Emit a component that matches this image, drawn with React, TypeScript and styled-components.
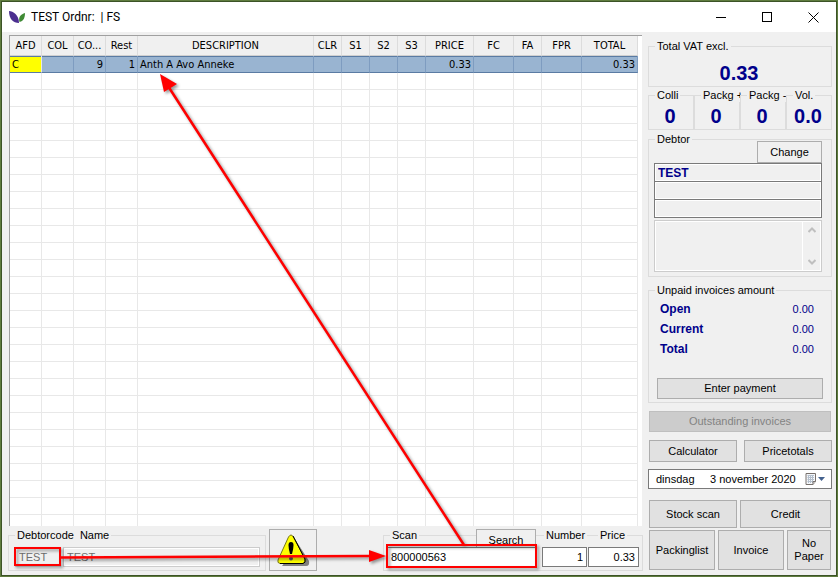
import React from "react";
import styled, { createGlobalStyle } from "styled-components";

const navy = "#00008b";

const GlobalStyle = createGlobalStyle`
  * { box-sizing: border-box; }
  html, body { margin: 0; }
  body, button, input, textarea { font: 11px/13px "Liberation Sans", Arial, sans-serif; color: #000; }
`;

const Window = styled.div`
  position: relative;
  display: flex;
  flex-direction: column;
  height: 100vh;
  min-height: 577px;
  min-width: 720px;
  background: #f0f0f0;
  border: 1px solid #5f7c3e;
  box-shadow: inset 0 0 0 1px #3c5326;
  overflow: hidden;
`;

const TitleBar = styled.header`
  display: flex;
  align-items: center;
  height: 30px;
  margin: 1px 1px 0;
  padding-left: 7px;
  background: #fff;
  flex: none;
`;

const Title = styled.h1`
  flex: 1;
  margin: 0 0 0 5px;
  font: 12px/16px Roboto, "Open Sans", sans-serif;
  white-space: pre;
`;

const CaptionButton = styled.button`
  display: grid;
  place-items: center;
  width: 46px;
  height: 29px;
  padding: 0;
  border: 0;
  background: transparent;
`;

const Body = styled.main`
  flex: 1;
  min-height: 0;
  display: grid;
  grid-template-columns: minmax(0, 1fr) 184px;
  column-gap: 5px;
  padding: 3px 5px 5px 7px;
`;

const Left = styled.div`
  display: flex;
  flex-direction: column;
  min-height: 0;
`;

const GridPanel = styled.div`
  flex: 1;
  min-height: 0;
  margin: 0 1px;
  padding-right: 4px;
  overflow: hidden;
  background: #fff;
  border-top: 1px solid #a0a0a0;
  border-left: 1px solid #a0a0a0;
`;

const OrderTable = styled.table`
  width: 100%;
  table-layout: fixed;
  border-collapse: separate;
  border-spacing: 0;
  font: 11px/14px "DejaVu Sans Condensed", "DejaVu Sans", sans-serif;
`;

const Head = styled.th`
  height: 20px;
  padding: 1px 0 0;
  font-weight: normal;
  background: #f0f0f0;
  border-right: 1px solid #dcdcdc;
  border-bottom: 1px solid #d0d0d0;
  white-space: nowrap;
`;

const Cell = styled.td<{ $right?: boolean; $tone?: "selected" | "marked" }>`
  height: 17px;
  padding: ${(p) => (p.$tone ? "1px 2px 0" : "0 2px")};
  text-align: ${(p) => (p.$right ? "right" : "left")};
  white-space: nowrap;
  background: ${(p) => (p.$tone === "selected" ? "#99b4d1" : p.$tone === "marked" ? "#ffff00" : "#fff")};
  border-right: 1px solid ${(p) => (p.$tone === "selected" ? "#7e9cc0" : "#e8e8e8")};
  border-bottom: 1px solid ${(p) => (p.$tone ? "#5a7ba3" : "#e8e8e8")};
  box-shadow: ${(p) => (p.$tone ? "inset 0 1px #5a7ba3" : "none")};
`;

const Group = styled.fieldset`
  min-width: 0;
  margin: 0;
  padding: 0;
  border: 1px solid #dcdcdc;
`;

const Legend = styled.legend`
  margin-left: 6px;
  padding: 0 2px;
  height: 13px;
  white-space: nowrap;
`;

const Button = styled.button`
  padding: 0;
  background: #e1e1e1;
  border: 1px solid #adadad;
  &:disabled { background: #cccccc; border-color: #bfbfbf; color: #838383; }
`;

const Field = styled.input<{ $right?: boolean }>`
  min-width: 0;
  width: 100%;
  height: 20px;
  padding: 0 3px;
  border: 1px solid #7a7a7a;
  border-radius: 0;
  background: #fff;
  text-align: ${(p) => (p.$right ? "right" : "left")};
  &:disabled { background: #f0f0f0; border-color: #cccccc; color: #6d6d6d; box-shadow: inset 0 0 0 1px #fff; }
`;

const EntryRow = styled.div`
  display: flex;
  flex: none;
  height: 45px;
  padding-top: 3px;
`;

const DebtorGroup = styled(Group)`
  flex: 1;
  height: 42px;
  margin-right: 3px;
`;

const LabelPair = styled(Legend)`
  display: flex;
  gap: 6px;
`;

const DebtorFields = styled.div`
  display: grid;
  grid-template-columns: 46px minmax(0, 1fr);
  gap: 2px;
  padding: 5px 5px 0 6px;
`;

const WarningButton = styled(Button)`
  display: grid;
  place-items: center;
  flex: none;
  width: 48px;
  height: 42px;
  background: #f0f0f0;
`;

const ScanFrame = styled.section`
  flex: none;
  width: 260px;
  height: 42px;
  margin-left: 66px;
  padding: 0 4px;
  background: linear-gradient(#dcdcdc, #dcdcdc) 0 6px / 100% 1px no-repeat,
    linear-gradient(#dcdcdc, #dcdcdc) 0 100% / 100% 1px no-repeat,
    linear-gradient(#dcdcdc, #dcdcdc) 0 100% / 1px 35px no-repeat,
    linear-gradient(#dcdcdc, #dcdcdc) 100% 100% / 1px 35px no-repeat;
`;

const ScanColumns = styled.div`
  display: grid;
  grid-template-columns: 154px 45px 51px;
  column-gap: 1px;
`;

const ScanCell = styled.div`
  display: flex;
  flex-direction: column;
  justify-content: space-between;
  height: 38px;
`;

const ScanCodeCell = styled(ScanCell)`
  margin-right: 4px;
`;

const Caption = styled.label<{ $indent: number }>`
  align-self: flex-start;
  margin-left: ${(p) => p.$indent}px;
  padding: 0 2px;
  background: #f0f0f0;
`;

const ScanCaption = styled.div`
  display: flex;
  align-items: flex-start;
  justify-content: space-between;
`;

const SearchButton = styled(Button)`
  width: 60px;
  height: 18px;
  padding-top: 4px;
  margin-right: 1px;
  border-bottom: 0;
  background: #f0f0f0;
`;

const Side = styled.aside`
  display: flex;
  flex-direction: column;
  padding-top: 5px;
`;

const TotalGroup = styled(Group)`
  height: 47px;
`;

const BigValue = styled.output<{ $drop?: boolean }>`
  display: block;
  padding-top: ${(p) => (p.$drop ? "9px" : "3px")};
  padding-right: 2px;
  font-size: 20px;
  line-height: 22px;
  font-weight: bold;
  text-align: center;
  color: ${navy};
`;

const Counters = styled.div`
  display: grid;
  grid-template-columns: repeat(4, minmax(0, 1fr));
  margin-top: 2px;
`;

const Counter = styled(Group)`
  height: 41px;
`;

const DebtorPanel = styled(Group)`
  height: 144px;
  margin-top: 3px;
`;

const DebtorStack = styled.div`
  display: flex;
  flex-direction: column;
  margin: -5px 9px 0 5px;
`;

const ChangeButton = styled(Button)`
  align-self: flex-end;
  width: 65px;
  height: 22px;
  background: #f0f0f0;
`;

const DebtorLine = styled.input`
  width: 100%;
  height: 19px;
  margin-bottom: -1px;
  padding: 0 3px;
  border: 1px solid #7a7a7a;
  background: #f0f0f0;
  box-shadow: inset 0 0 0 1px #fff;
  font-size: 12px;
  font-weight: bold;
  color: ${navy};
`;

const NoteBox = styled.div`
  display: flex;
  height: 52px;
  margin-top: 3px;
  border: 1px solid #cccccc;
  padding: 1px;
  background: #fff;
`;

const Note = styled.textarea`
  flex: 1;
  min-width: 0;
  border: 0;
  resize: none;
  overflow: hidden;
  background: #f0f0f0;
`;

const ScrollTrack = styled.div`
  display: flex;
  flex-direction: column;
  justify-content: space-between;
  align-items: center;
  width: 17px;
  margin-left: 1px;
  padding: 5px 0;
  background: #f0f0f0;
`;

const UnpaidPanel = styled(Group)`
  height: 119px;
  margin-top: 7px;
`;

const Amounts = styled.dl`
  display: grid;
  grid-template-columns: 1fr auto;
  margin: 2px 17px 19px 11px;
  line-height: 20px;
  color: ${navy};
  dt { font-size: 12px; font-weight: bold; }
  dd { margin: 0; }
`;

const PaymentButton = styled(Button)`
  display: block;
  width: calc(100% - 16px);
  height: 21px;
  margin: 0 8px;
`;

const Actions = styled.div<{ $columns: string; $gap: number; $top: number; $height: number; $end?: number }>`
  display: grid;
  grid-template-columns: ${(p) => p.$columns};
  grid-auto-rows: ${(p) => p.$height}px;
  column-gap: ${(p) => p.$gap}px;
  margin: ${(p) => p.$top}px ${(p) => p.$end ?? 1}px 0 1px;
`;

const DateField = styled.button`
  display: flex;
  align-items: center;
  height: 20px;
  margin-top: 7px;
  padding: 0 5px 0 7px;
  background: #fff;
  border: 1px solid #7a7a7a;
  flex: none;
  svg { margin-left: auto; }
`;

const DayName = styled.span`
  width: 54px;
  text-align: left;
`;

const Overlay = styled.svg`
  position: absolute;
  inset: -1px;
  width: calc(100% + 2px);
  height: calc(100% + 2px);
  pointer-events: none;
`;

const columns: { name: string; width?: number; value?: string; right?: boolean }[] = [
  { name: "AFD", width: 32, value: "C" },
  { name: "COL", width: 32 },
  { name: "CO...", width: 32, value: "9", right: true },
  { name: "Rest", width: 32, value: "1", right: true },
  { name: "DESCRIPTION", value: "Anth A Avo Anneke" },
  { name: "CLR", width: 28 },
  { name: "S1", width: 28 },
  { name: "S2", width: 28 },
  { name: "S3", width: 28 },
  { name: "PRICE", width: 48, value: "0.33", right: true },
  { name: "FC", width: 40 },
  { name: "FA", width: 28 },
  { name: "FPR", width: 40 },
  { name: "TOTAL", width: 56, value: "0.33", right: true },
];

const counters = [
  ["Colli", "0"],
  ["Packg +", "0"],
  ["Packg -", "0"],
  ["Vol.", "0.0"],
];

const amounts = [
  ["Open", "0.00"],
  ["Current", "0.00"],
  ["Total", "0.00"],
];

const Logo = () => (
  <svg width="17" height="13" viewBox="0 0 17 13" aria-hidden="true">
    <path d="M0 0C4 0 10 4 10 12C4 12 0 8 0 0Z" fill="#4b2e8f" />
    <path d="M16 2C12 3 9 6 10.500 11C15 10 16 6 16 2Z" fill="#3f8a35" />
  </svg>
);

const Warning = () => (
  <svg width="34" height="34" viewBox="0 0 34 34" aria-hidden="true">
    <path d="M17 3L33 28Q34 33 30 33H6L9 29Z" fill="#808080" />
    <path d="M12.500 4Q15 0 17.500 4L29 26Q30 30 27 30.500H4Q1 30 2 27Z" fill="#ffff00" stroke="#77771a" />
    <path d="M17 3L29 26Q30 30 27 30.500H4" fill="none" stroke="#000" />
    <path d="M12.500 12Q12.500 9 15 9Q17.500 9 17.500 12Q17.500 16 16 21H14Q12.500 16 12.500 12Z" fill="#000" />
    <circle cx="15" cy="25.500" r="2" fill="#555" />
  </svg>
);

const Calendar = () => (
  <svg width="21" height="14" viewBox="0 0 21 14" aria-hidden="true">
    <path d="M1 1.500H10.500V9.500L8 12.500H1Z" fill="#f5f7fa" stroke="#77706c" />
    <path d="M2.500 3.500H9M2.500 5.500H9M2.500 7.500H9M2.500 9.500H8M3.500 3V11M5.500 3V11M7.500 3V11" stroke="#b4bfcc" />
    <path d="M8 12.500V9.500H10.500" fill="#ddd" stroke="#77706c" />
    <path d="M13 5H20L16.500 9Z" fill="#44618e" />
  </svg>
);

const Chevron = ({ up }: { up?: boolean }) => (
  <svg width="8" height="6" viewBox="0 0 8 6" aria-hidden="true">
    <path d={up ? "M0.500 5L4 1.500L7.500 5" : "M0.500 1L4 4.500L7.500 1"} fill="none" stroke="#bfbfbf" strokeWidth="2" />
  </svg>
);

const Annotations = () => (
  <Overlay viewBox="0 0 838 577" preserveAspectRatio="none" aria-hidden="true">
    <defs>
      <filter id="shadow" x="0" y="0" width="838" height="577" filterUnits="userSpaceOnUse" colorInterpolationFilters="sRGB">
        <feDropShadow dx="2" dy="2" stdDeviation="1.500" floodColor="#000" floodOpacity="0.4" />
      </filter>
    </defs>
    <g filter="url(#shadow)" fill="none" stroke="#f00" strokeWidth="2">
      <rect x="15" y="548" width="45" height="17" />
      <rect x="387" y="545" width="149" height="22" />
      <path d="M61 557.500L372 556M464 545L168 86" strokeWidth="2.500" />
      <path d="M386 556L369 562V550Z" fill="#f00" stroke="none" />
      <path d="M160 74L177 84L164 92Z" fill="#f00" stroke="none" />
    </g>
  </Overlay>
);

export default function App() {
  return (
    <Window>
      <GlobalStyle />
      <TitleBar>
        <Logo />
        <Title>{"TEST Ordnr:  | FS"}</Title>
        <CaptionButton aria-label="Minimize">
          <svg width="11" height="11"><path d="M0 5.500H10" stroke="#000" /></svg>
        </CaptionButton>
        <CaptionButton aria-label="Maximize">
          <svg width="11" height="11"><rect x="0.500" y="0.500" width="9" height="9" fill="none" stroke="#000" /></svg>
        </CaptionButton>
        <CaptionButton aria-label="Close">
          <svg width="11" height="11"><path d="M0.500 0.500L10.500 10.500M10.500 0.500L0.500 10.500" stroke="#000" /></svg>
        </CaptionButton>
      </TitleBar>
      <Body>
        <Left>
          <GridPanel>
            <OrderTable>
              <colgroup>
                {columns.map((c) => <col key={c.name} width={c.width} />)}
              </colgroup>
              <thead>
                <tr>{columns.map((c) => <Head key={c.name} scope="col">{c.name}</Head>)}</tr>
              </thead>
              <tbody>
                <tr>
                  {columns.map((c, i) => (
                    <Cell key={c.name} $right={c.right} $tone={i === 0 ? "marked" : "selected"}>{c.value}</Cell>
                  ))}
                </tr>
                {Array.from({ length: 27 }, (_, row) => (
                  <tr key={row}>{columns.map((c) => <Cell key={c.name} />)}</tr>
                ))}
              </tbody>
            </OrderTable>
          </GridPanel>
          <EntryRow>
            <DebtorGroup>
              <LabelPair>
                <label htmlFor="code">Debtorcode</label>
                <label htmlFor="name">Name</label>
              </LabelPair>
              <DebtorFields>
                <Field id="code" defaultValue="TEST" disabled />
                <Field id="name" defaultValue="TEST" disabled />
              </DebtorFields>
            </DebtorGroup>
            <WarningButton aria-label="Warning"><Warning /></WarningButton>
            <ScanFrame>
              <ScanColumns>
                <ScanCodeCell>
                  <ScanCaption>
                    <Caption htmlFor="scan" $indent={3}>Scan</Caption>
                    <SearchButton>Search</SearchButton>
                  </ScanCaption>
                  <Field id="scan" defaultValue="800000563" />
                </ScanCodeCell>
                <ScanCell>
                  <Caption htmlFor="number" $indent={2}>Number</Caption>
                  <Field id="number" $right defaultValue="1" />
                </ScanCell>
                <ScanCell>
                  <Caption htmlFor="price" $indent={10}>Price</Caption>
                  <Field id="price" $right defaultValue="0.33" />
                </ScanCell>
              </ScanColumns>
            </ScanFrame>
          </EntryRow>
        </Left>
        <Side>
          <TotalGroup>
            <Legend>Total VAT excl.</Legend>
            <BigValue $drop>0.33</BigValue>
          </TotalGroup>
          <Counters>
            {counters.map(([name, value]) => (
              <Counter key={name}>
                <Legend>{name}</Legend>
                <BigValue>{value}</BigValue>
              </Counter>
            ))}
          </Counters>
          <DebtorPanel>
            <Legend>Debtor</Legend>
            <DebtorStack>
              <ChangeButton>Change</ChangeButton>
              <DebtorLine aria-label="Debtor name" readOnly value="TEST" />
              <DebtorLine aria-label="Debtor address" readOnly value="" />
              <DebtorLine aria-label="Debtor city" readOnly value="" />
              <NoteBox>
                <Note aria-label="Debtor note" disabled />
                <ScrollTrack><Chevron up /><Chevron /></ScrollTrack>
              </NoteBox>
            </DebtorStack>
          </DebtorPanel>
          <UnpaidPanel>
            <Legend>Unpaid invoices amount</Legend>
            <Amounts>
              {amounts.map(([name, value]) => (
                <React.Fragment key={name}><dt>{name}</dt><dd>{value}</dd></React.Fragment>
              ))}
            </Amounts>
            <PaymentButton>Enter payment</PaymentButton>
          </UnpaidPanel>
          <Actions $columns="1fr" $gap={0} $top={8} $height={21}>
            <Button disabled>Outstanding invoices</Button>
          </Actions>
          <Actions $columns="1fr 1fr" $gap={7} $top={8} $height={22} $end={0}>
            <Button>Calculator</Button>
            <Button>Pricetotals</Button>
          </Actions>
          <DateField aria-label="Date">
            <DayName>dinsdag</DayName>
            <span>3 november 2020</span>
            <Calendar />
          </DateField>
          <Actions $columns="88fr 91fr" $gap={3} $top={11} $height={28}>
            <Button>Stock scan</Button>
            <Button>Credit</Button>
          </Actions>
          <Actions $columns="66fr 66fr 44fr" $gap={3} $top={2} $height={40}>
            <Button>Packinglist</Button>
            <Button>Invoice</Button>
            <Button>No Paper</Button>
          </Actions>
        </Side>
      </Body>
      <Annotations />
    </Window>
  );
}
